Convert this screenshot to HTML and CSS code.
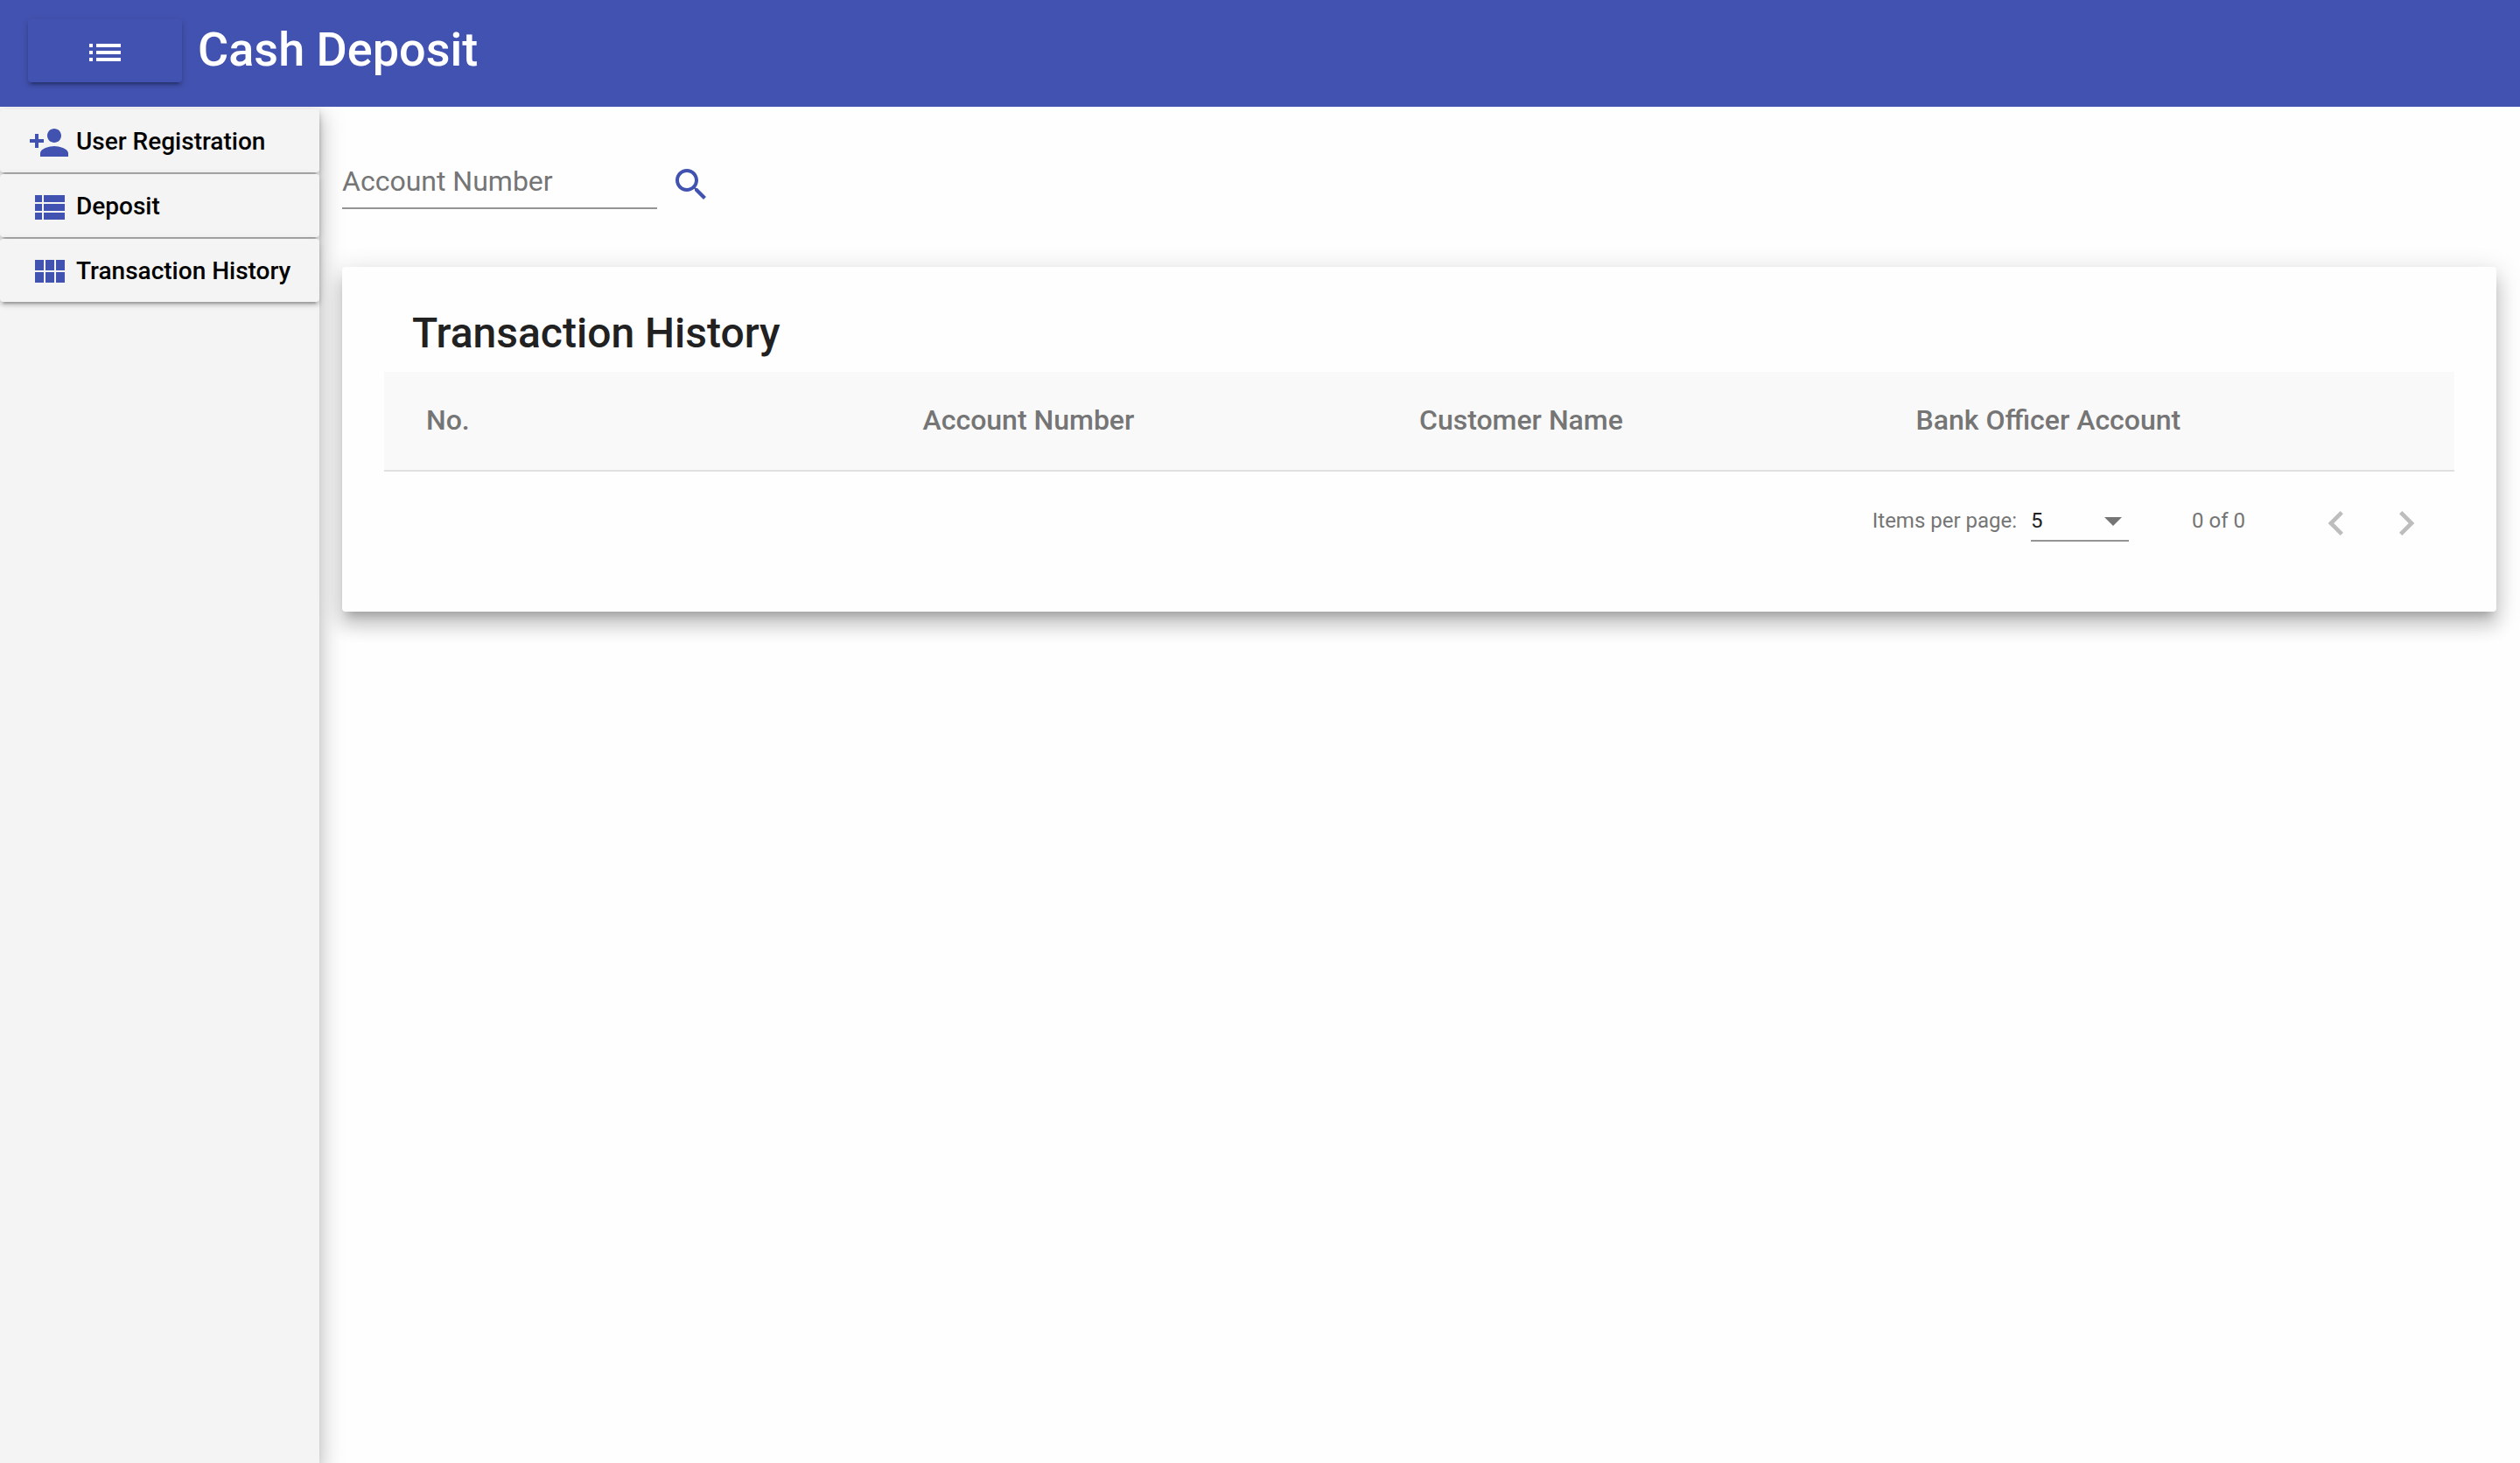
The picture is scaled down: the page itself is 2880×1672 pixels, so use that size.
FILE: index.html
```html
<!DOCTYPE html>
<html lang="en">
<head>
<meta charset="utf-8">
<meta name="viewport" content="width=device-width, initial-scale=1">
<title>Cash Deposit</title>
<link rel="stylesheet" href="styles.css">
</head>
<body>
<div class="app">
  <header class="toolbar">
    <button class="menu-button" type="button" aria-label="Toggle menu">
      <svg class="icon" viewBox="0 0 24 24" aria-hidden="true"><path d="M3 13h2v-2H3v2zm0 4h2v-2H3v2zm0-8h2V7H3v2zm4 4h14v-2H7v2zm0 4h14v-2H7v2zM7 7v2h14V7H7z"/></svg>
    </button>
    <h1 class="toolbar-title">Cash Deposit</h1>
  </header>
  <div class="body">
    <nav class="sidenav" aria-label="Main">
      <button class="nav-button" type="button">
        <svg class="icon" viewBox="0 0 24 24" aria-hidden="true"><path d="M15 12c2.21 0 4-1.79 4-4s-1.790-4-4-4-4 1.790-4 4 1.790 4 4 4zm-9-2V7H4v3H1v2h3v3h2v-3h3v-2H6zm9 4c-2.670 0-8 1.340-8 4v2h16v-2c0-2.660-5.330-4-8-4z"/></svg>
        <span>User Registration</span>
      </button>
      <button class="nav-button" type="button">
        <svg class="icon" viewBox="0 0 24 24" aria-hidden="true"><path d="M4 14h4v-4H4v4zm0 5h4v-4H4v4zM4 9h4V5H4v4zm5 5h12v-4H9v4zm0 5h12v-4H9v4zM9 5v4h12V5H9z"/></svg>
        <span>Deposit</span>
      </button>
      <button class="nav-button" type="button">
        <svg class="icon" viewBox="0 0 24 24" aria-hidden="true"><path d="M4 11h5V5H4v6zm0 7h5v-6H4v6zm6 0h5v-6h-5v6zm6 0h5v-6h-5v6zm-6-7h5V5h-5v6zm6-6v6h5V5h-5z"/></svg>
        <span>Transaction History</span>
      </button>
    </nav>
    <main class="content">
      <form class="search">
        <input class="search-input" type="text" placeholder="Account Number" aria-label="Account Number">
        <button class="search-button" type="button" aria-label="Search">
          <svg class="icon" viewBox="0 0 24 24" aria-hidden="true"><path d="M15.500 14h-.79l-.28-.27C15.410 12.590 16 11.110 16 9.500 16 5.910 13.090 3 9.500 3S3 5.910 3 9.500 5.910 16 9.500 16c1.610 0 3.090-.59 4.230-1.570l.27.28v.79l5 4.990L20.490 19l-4.990-5zm-6 0C7.010 14 5 11.990 5 9.500S7.010 5 9.500 5 14 7.010 14 9.500 11.990 14 9.500 14z"/></svg>
        </button>
      </form>
      <section class="card">
        <h2 class="card-title">Transaction History</h2>
        <table class="history">
          <thead>
            <tr>
              <th scope="col">No.</th>
              <th scope="col">Account Number</th>
              <th scope="col">Customer Name</th>
              <th scope="col">Bank Officer Account</th>
            </tr>
          </thead>
        </table>
        <div class="paginator">
          <label for="page-size">Items per page:</label>
          <div class="select-field">
            <select id="page-size">
              <option>5</option>
              <option>10</option>
              <option>20</option>
            </select>
            <span class="select-arrow"></span>
          </div>
          <span class="range">0 of 0</span>
          <button class="page-button" type="button" aria-label="Previous page" disabled>
            <svg viewBox="0 0 24 24" aria-hidden="true"><path d="M15.410 7.410L14 6l-6 6 6 6 1.410-1.410L10.830 12z"/></svg>
          </button>
          <button class="page-button" type="button" aria-label="Next page" disabled>
            <svg viewBox="0 0 24 24" aria-hidden="true"><path d="M10 6L8.590 7.410 13.170 12l-4.580 4.590L10 18l6-6z"/></svg>
          </button>
        </div>
      </section>
    </main>
  </div>
</div>
</body>
</html>
```
FILE: styles.css
```css
:root {
  --primary: #4252b0;
  --surface: #f4f4f4;
  --secondary-text: #757575;
  --raised: 0 6px 2px -4px rgba(0, 0, 0, .2), 0 4px 4px 0 rgba(0, 0, 0, .14), 0 2px 10px 0 rgba(0, 0, 0, .12);
  --lifted: 0 10px 10px -6px rgba(0, 0, 0, .2), 0 16px 20px 2px rgba(0, 0, 0, .14), 0 6px 28px 4px rgba(0, 0, 0, .12);
}

* {
  box-sizing: border-box;
}

body {
  margin: 0;
  background: #fefefe;
  color: #212121;
  font-family: Roboto, "Liberation Sans", sans-serif;
}

button,
input,
select {
  margin: 0;
  padding: 0;
  border: 0;
  background: none;
  font: inherit;
  color: inherit;
}

.icon {
  display: block;
  flex: none;
  width: 48px;
  height: 48px;
  fill: currentColor;
}

.app {
  display: flex;
  flex-direction: column;
  min-height: 100vh;
}

/* Toolbar */

.toolbar {
  display: flex;
  align-items: flex-start;
  gap: 18px;
  padding: 22px 32px 28px;
  background: var(--primary);
  color: #fff;
}

.menu-button {
  display: flex;
  align-items: center;
  justify-content: center;
  width: 176px;
  height: 72px;
  padding-top: 4px;
  border-radius: 4px;
  background: var(--primary);
  box-shadow: var(--raised);
}

.toolbar-title {
  margin: 0;
  font-size: 54px;
  font-weight: 500;
  line-height: 70px;
}

/* Side navigation */

.body {
  display: flex;
  flex: 1;
  overflow: hidden;
}

.sidenav {
  display: flex;
  flex: none;
  flex-direction: column;
  gap: 2px;
  width: 365px;
  padding-top: 3px;
  background: var(--surface);
  box-shadow: var(--lifted);
}

.nav-button {
  display: flex;
  align-items: center;
  gap: 7px;
  height: 72px;
  padding: 0 32px;
  border-radius: 4px;
  background: var(--surface);
  box-shadow: var(--raised);
  color: #000;
  font-size: 28px;
  font-weight: 500;
  white-space: nowrap;
}

.nav-button .icon {
  margin-top: 4px;
  color: var(--primary);
}

/* Content */

.content {
  flex: 1;
  min-width: 0;
  padding: 57px 27px 48px 26px;
}

.search {
  display: flex;
  align-items: flex-end;
  gap: 15px;
  margin-bottom: 66px;
}

.search-input {
  width: 360px;
  height: 60px;
  padding-bottom: 3px;
  border-bottom: 2px solid #949494;
  font-size: 32px;
}

.search-input::placeholder {
  color: var(--secondary-text);
  opacity: 1;
}

.search-button {
  padding-bottom: 4px;
  color: var(--primary);
}

.card {
  padding: 48px;
  border-radius: 4px;
  background: #fefefe;
  box-shadow: var(--lifted);
}

.card-title {
  margin: 0 32px 16px;
  font-size: 48px;
  font-weight: 500;
  line-height: 56px;
}

.history {
  width: 100%;
  border-spacing: 0;
  table-layout: fixed;
  padding: 0 48px;
  border-bottom: 2px solid #e0e0e0;
  background: #f9f9f9;
}

.history th {
  height: 112px;
  padding: 0 0 3px;
  color: var(--secondary-text);
  font-size: 32px;
  font-weight: 500;
  text-align: left;
}

/* Paginator */

.paginator {
  display: flex;
  align-items: center;
  justify-content: flex-end;
  height: 112px;
  padding-right: 15px;
  color: var(--secondary-text);
  font-size: 24px;
}

.select-field {
  display: grid;
  align-items: center;
  width: 112px;
  margin-left: 16px;
  border-bottom: 2px solid #949494;
}

.select-field select {
  grid-area: 1 / 1;
  width: 100%;
  height: 46px;
  padding-top: 2px;
  appearance: none;
  color: #212121;
}

.select-arrow {
  grid-area: 1 / 1;
  justify-self: end;
  margin: 4px 8px 0 0;
  border: 10px solid transparent;
  border-top-color: var(--secondary-text);
  border-bottom: 0;
  pointer-events: none;
}

.range {
  margin: 0 64px 0 72px;
}

.page-button {
  display: flex;
  align-items: center;
  justify-content: center;
  width: 80px;
  height: 80px;
  padding-top: 6px;
  color: #bdbdbd;
}

.page-button svg {
  width: 56px;
  height: 56px;
  fill: currentColor;
}
```
